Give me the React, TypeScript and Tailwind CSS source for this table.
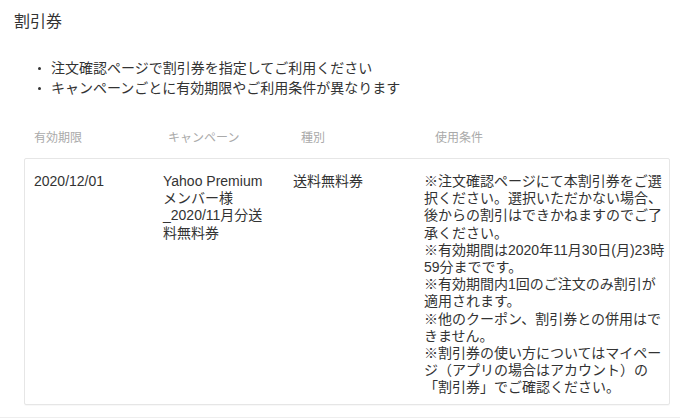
const notes = [
  '注文確認ページで割引券を指定してご利用ください',
  'キャンペーンごとに有効期限やご利用条件が異なります',
];

const campaignLines = ['Yahoo Premium', 'メンバー様', '_2020/11月分送', '料無料券'];

const conditionLines = [
  '※注文確認ページにて本割引券をご選',
  '択ください。選択いただかない場合、',
  '後からの割引はできかねますのでご了',
  '承ください。',
  '※有効期間は2020年11月30日(月)23時',
  '59分までです。',
  '※有効期間内1回のご注文のみ割引が',
  '適用されます。',
  '※他のクーポン、割引券との併用はで',
  'きません。',
  '※割引券の使い方についてはマイペー',
  'ジ（アプリの場合はアカウント）の',
  '「割引券」でご確認ください。',
];

export default function App() {
  return (
    <div
      className="w-[680px] h-[419px] overflow-hidden bg-white text-[#333]"
      style={{ fontFamily: '"Liberation Sans", "Noto Sans CJK JP", sans-serif' }}
    >
      {/* Title */}
      <h1 className="pt-[10px] pl-[14px] text-[16px] leading-[24px] font-normal">割引券</h1>

      {/* Notes */}
      <ul className="mt-[24px] pl-[38px] text-[14px] leading-[20px]">
        {notes.map((n) => (
          <li key={n} className="flex items-center">
            <span className="w-[3px] h-[3px] rounded-full bg-[#333] mr-[10px]" />
            <span>{n}</span>
          </li>
        ))}
      </ul>

      {/* Table header */}
      <div className="mt-[32px] flex text-[12px] leading-[16px] text-[#aaa]">
        <div className="pl-[34px] w-[168px]">有効期限</div>
        <div className="w-[133px]">キャンペーン</div>
        <div className="w-[134px]">種別</div>
        <div>使用条件</div>
      </div>

      {/* Coupon row */}
      <div className="mt-[12px] ml-[24px] w-[646px] rounded-[2px] border border-[#e6e6e6] shadow-[0_1px_1px_rgba(0,0,0,0.03)]">
        <div className="flex pt-[14px] pb-[7px] text-[14px] leading-[17.2px]">
          <div className="pl-[9px] w-[138px]">2020/12/01</div>
          <div className="w-[130px]">
            {campaignLines.map((l) => (
              <div key={l}>{l}</div>
            ))}
          </div>
          <div className="w-[131px]">送料無料券</div>
          <div className="flex-1">
            {conditionLines.map((l) => (
              <div key={l} className="whitespace-nowrap">
                {l}
              </div>
            ))}
          </div>
        </div>
      </div>

      <div className="mt-[12px] border-t border-[#eeeeee]" />
    </div>
  );
}
